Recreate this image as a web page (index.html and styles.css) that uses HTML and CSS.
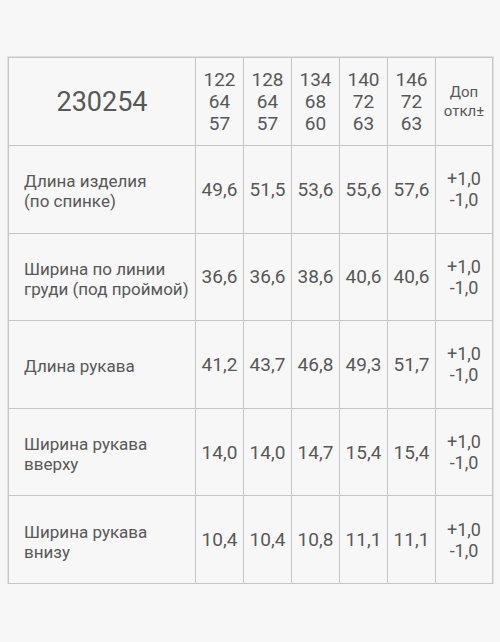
FILE: index.html
```html
<!DOCTYPE html>
<html lang="ru">
<head>
<meta charset="utf-8">
<title>230254</title>
<link rel="stylesheet" href="styles.css">
</head>
<body>
<table class="sizes">
  <colgroup>
    <col class="c-label">
    <col class="c-num"><col class="c-num"><col class="c-num"><col class="c-num"><col class="c-num">
    <col class="c-tol">
  </colgroup>
  <tr class="head-row">
    <td class="article">230254</td>
    <td class="head">122<br>64<br>57</td>
    <td class="head">128<br>64<br>57</td>
    <td class="head">134<br>68<br>60</td>
    <td class="head">140<br>72<br>63</td>
    <td class="head">146<br>72<br>63</td>
    <td class="tolhead">Доп<br>откл±</td>
  </tr>
  <tr>
    <td class="label">Длина изделия<br>(по спинке)</td>
    <td class="num">49,6</td><td class="num">51,5</td><td class="num">53,6</td><td class="num">55,6</td><td class="num">57,6</td>
    <td class="tol">+1,0<br>-1,0</td>
  </tr>
  <tr>
    <td class="label">Ширина по линии<br>груди (под проймой)</td>
    <td class="num">36,6</td><td class="num">36,6</td><td class="num">38,6</td><td class="num">40,6</td><td class="num">40,6</td>
    <td class="tol">+1,0<br>-1,0</td>
  </tr>
  <tr>
    <td class="label">Длина рукава</td>
    <td class="num">41,2</td><td class="num">43,7</td><td class="num">46,8</td><td class="num">49,3</td><td class="num">51,7</td>
    <td class="tol">+1,0<br>-1,0</td>
  </tr>
  <tr>
    <td class="label">Ширина рукава<br>вверху</td>
    <td class="num">14,0</td><td class="num">14,0</td><td class="num">14,7</td><td class="num">15,4</td><td class="num">15,4</td>
    <td class="tol">+1,0<br>-1,0</td>
  </tr>
  <tr>
    <td class="label">Ширина рукава<br>внизу</td>
    <td class="num">10,4</td><td class="num">10,4</td><td class="num">10,8</td><td class="num">11,1</td><td class="num">11,1</td>
    <td class="tol">+1,0<br>-1,0</td>
  </tr>
</table>
</body>
</html>
```
FILE: styles.css
```css
html, body {
  margin: 0;
  padding: 0;
  background: #f7f7f7;
}
body {
  padding: 57px 0 0 8px;
  font-family: Roboto, "Liberation Sans", Arial, sans-serif;
  color: #585858;
}
.sizes {
  border-collapse: collapse;
  table-layout: fixed;
  width: 484px;
  box-shadow: 0 0 0 1px #e2e2e2;
}
.c-label { width: 187px; }
.c-num { width: 48px; }
.c-tol { width: 57px; }
.sizes td {
  border: 1px solid #c6c6c6;
  height: 82.6px;
  padding: 0;
  vertical-align: middle;
  text-align: center;
}
.sizes .head-row td {
  height: 87px;
}
.article {
  font-size: 27px;
}
.head {
  font-size: 19px;
  line-height: 22px;
}
.tolhead {
  font-size: 15px;
  line-height: 19px;
}
.sizes .label {
  font-size: 17px;
  line-height: 20px;
  text-align: left;
  padding: 4px 0 0 15px;
}
.num {
  font-size: 19px;
}
.tol {
  font-size: 18px;
  line-height: 21px;
}
```
